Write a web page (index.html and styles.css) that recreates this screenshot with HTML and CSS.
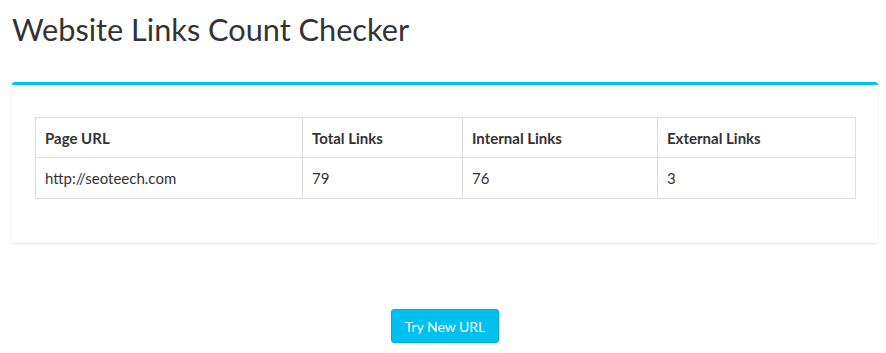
FILE: index.html
```html
<!doctype html>
<html lang="en">
  <head>
    <title>Website Links Count Checker</title>
    <meta charset="UTF-8">
    <link rel="stylesheet" href="styles.css">
  </head>
  <body>
    <div class="page">
      <h1 class="pageTitle">Website Links Count Checker</h1>
      <div class="box">
        <table class="linksTable">
          <thead>
            <tr>
              <th class="colUrl">Page URL</th>
              <th class="colTotal">Total Links</th>
              <th class="colInternal">Internal Links</th>
              <th>External Links</th>
            </tr>
          </thead>
          <tbody>
            <tr>
              <td>http://seoteech.com</td>
              <td>79</td>
              <td>76</td>
              <td>3</td>
            </tr>
          </tbody>
        </table>
      </div>
      <div class="ctaWrapper">
        <button type="button" class="btnInfo">Try New URL</button>
      </div>
    </div>
  </body>
</html>
```

FILE: styles.css
```css
body {
  margin: 0;
  background-color: #fff;
  font-family: Lato, "Noto Sans", sans-serif;
  color: #333;
}

.page {
  padding: 0 8px 0 12px;
}

.pageTitle {
  margin: 0;
  padding: 12px 0 0 0;
  height: 70px;
  box-sizing: border-box;
  font-size: 30.7px;
  font-weight: normal;
  line-height: 36px;
  color: #333;
}

.box {
  margin-top: 12px;
  border-top: 3px solid #00c0ef;
  border-radius: 3px;
  background-color: #fff;
  box-shadow: 0 1px 2px rgba(0, 0, 0, 0.12);
  padding: 32px 22px 44px 23px;
}

.linksTable {
  width: 100%;
  border-collapse: collapse;
  font-size: 15px;
}

.linksTable th,
.linksTable td {
  border: 1px solid #ddd;
  text-align: left;
  padding: 0 9px;
  height: 39px;
}

.linksTable td {
  height: 40px;
}

.linksTable th {
  font-weight: bold;
}

.colUrl {
  width: 248px;
}
.colTotal {
  width: 141px;
}
.colInternal {
  width: 176px;
}

.ctaWrapper {
  display: flex;
  justify-content: center;
  padding-top: 66px;
}

.btnInfo {
  background-color: #00c0ef;
  border: 1px solid #00acd6;
  border-radius: 3px;
  color: #fff;
  font-family: inherit;
  font-size: 14px;
  height: 34px;
  padding: 0 13px;
  cursor: pointer;
}
```
